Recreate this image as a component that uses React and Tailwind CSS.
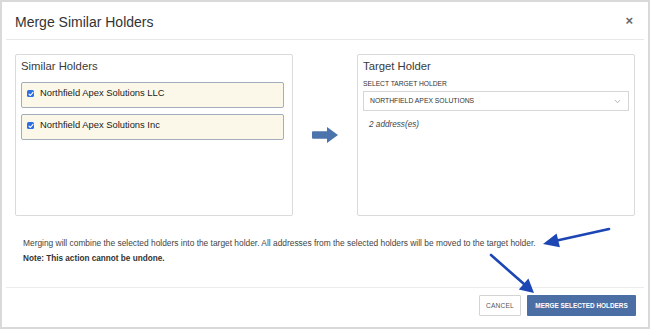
import { ChevronDown } from 'lucide-react';

const holders = ['Northfield Apex Solutions LLC', 'Northfield Apex Solutions Inc'];

function CheckMark() {
    return (
        <span className="mt-[3px] flex h-[7px] w-[7px] shrink-0 items-center justify-center rounded-[1.5px] bg-[#2d6fe3]">
            <svg width="6" height="6" viewBox="0 0 6 6">
                <path d="M1 3.2 L2.4 4.5 L5 1.4" fill="none" stroke="white" strokeWidth="1.1" strokeLinecap="round" strokeLinejoin="round" />
            </svg>
        </span>
    );
}

function BlockArrow() {
    return (
        <svg width="26" height="16" viewBox="0 0 26 16">
            <path d="M1 4.2 H15 V0 L26 8 L15 16 V11.8 H1 Q0 11.8 0 10.8 V5.2 Q0 4.2 1 4.2 Z" fill="#4a74ab" />
        </svg>
    );
}

// annotation arrows drawn over the dialog
function Annotations() {
    return (
        <svg className="pointer-events-none absolute left-0 top-0" width="650" height="329">
            <line x1="607" y1="227" x2="555" y2="238.6" stroke="#1c46b3" strokeWidth="2.6" strokeLinecap="round" />
            <polygon points="541,242 557.9,245.2 554.6,231.4" fill="#1c46b3" />
            <line x1="489" y1="253" x2="522" y2="282" stroke="#1c46b3" strokeWidth="2.6" strokeLinecap="round" />
            <polygon points="532,291 516.8,287.4 526.4,276.4" fill="#1c46b3" />
        </svg>
    );
}

export default function App() {
    return (
        <div className="relative flex h-[329px] w-[650px] flex-col overflow-hidden border-2 border-[#d9d9d9] bg-white font-['Liberation_Sans',Arial,sans-serif] text-[#333]">
            <div className="flex h-[37px] shrink-0 items-start justify-between pl-[13px] pr-[15px] pt-[12px]">
                <h2 className="text-[14px] leading-[16px] text-[#333]">Merge Similar Holders</h2>
                <span className="mt-[-1px] text-[13px] font-bold leading-[16px] text-[#666]">×</span>
            </div>
            <div className="mx-[4px] h-px shrink-0 bg-[#e8e8e8]" />

            <div className="grid shrink-0 grid-cols-[278px_64px_278px] px-[13px] pt-[14px]">
                <div className="h-[162px] rounded-[2px] border border-[#dadada] pl-[5px] pr-[8px] pt-[4px]">
                    <h3 className="text-[11.3px] leading-[14px] text-[#3a3a3a]">Similar Holders</h3>
                    <div className="mt-[9px] flex flex-col gap-[6px]">
                        {holders.map((name) => (
                            <div key={name} className="flex h-[26px] items-start gap-[6px] rounded-[2px] border border-[#a3adbd] bg-[#fcf8e9] pl-[5px] pt-[4px]">
                                <CheckMark />
                                <span className="text-[9.4px] leading-[12px] text-[#1a1a1a]">{name}</span>
                            </div>
                        ))}
                    </div>
                </div>

                <div className="flex items-center justify-center">
                    <BlockArrow />
                </div>

                <div className="h-[162px] rounded-[2px] border border-[#dadada] px-[5px] pt-[4px]">
                    <h3 className="text-[11.3px] leading-[14px] text-[#3a3a3a]">Target Holder</h3>
                    <div className="mt-[7px] text-[6.7px] leading-[8px] text-[#333]">SELECT TARGET HOLDER</div>
                    <div className="mt-[3px] flex h-[20px] items-center justify-between border border-[#d6d6d6] pl-[6px] pr-[6px]">
                        <span className="text-[6.8px] leading-[8px] text-[#333]">NORTHFIELD APEX SOLUTIONS</span>
                        <ChevronDown size={9} strokeWidth={1.5} className="text-[#777]" />
                    </div>
                    <div className="mt-[8px] pl-[6px] text-[8.2px] italic leading-[12px] text-[#444]">2 address(es)</div>
                </div>
            </div>

            <div className="shrink-0 pl-[21px] pt-[21px]">
                <p className="text-[8.4px] leading-[12px] text-[#444]">
                    Merging will combine the selected holders into the target holder. All addresses from the selected holders will be moved to the target holder.
                </p>
                <p className="mt-[4px] text-[8.2px] font-bold leading-[12px] text-[#333]">Note: This action cannot be undone.</p>
            </div>

            <div className="mx-[4px] mt-[22px] h-px shrink-0 bg-[#ececec]" />

            <div className="flex shrink-0 justify-end gap-[6px] pr-[12px] pt-[7px]">
                <button className="h-[21px] w-[42px] rounded-[1px] border border-[#d4d4d4] bg-white text-[6.6px] tracking-[0.2px] text-[#555]">
                    CANCEL
                </button>
                <button className="h-[21px] w-[109px] rounded-[1px] bg-[#4b6fa4] text-[6.4px] font-bold text-white">
                    MERGE SELECTED HOLDERS
                </button>
            </div>

            <Annotations />
        </div>
    );
}
